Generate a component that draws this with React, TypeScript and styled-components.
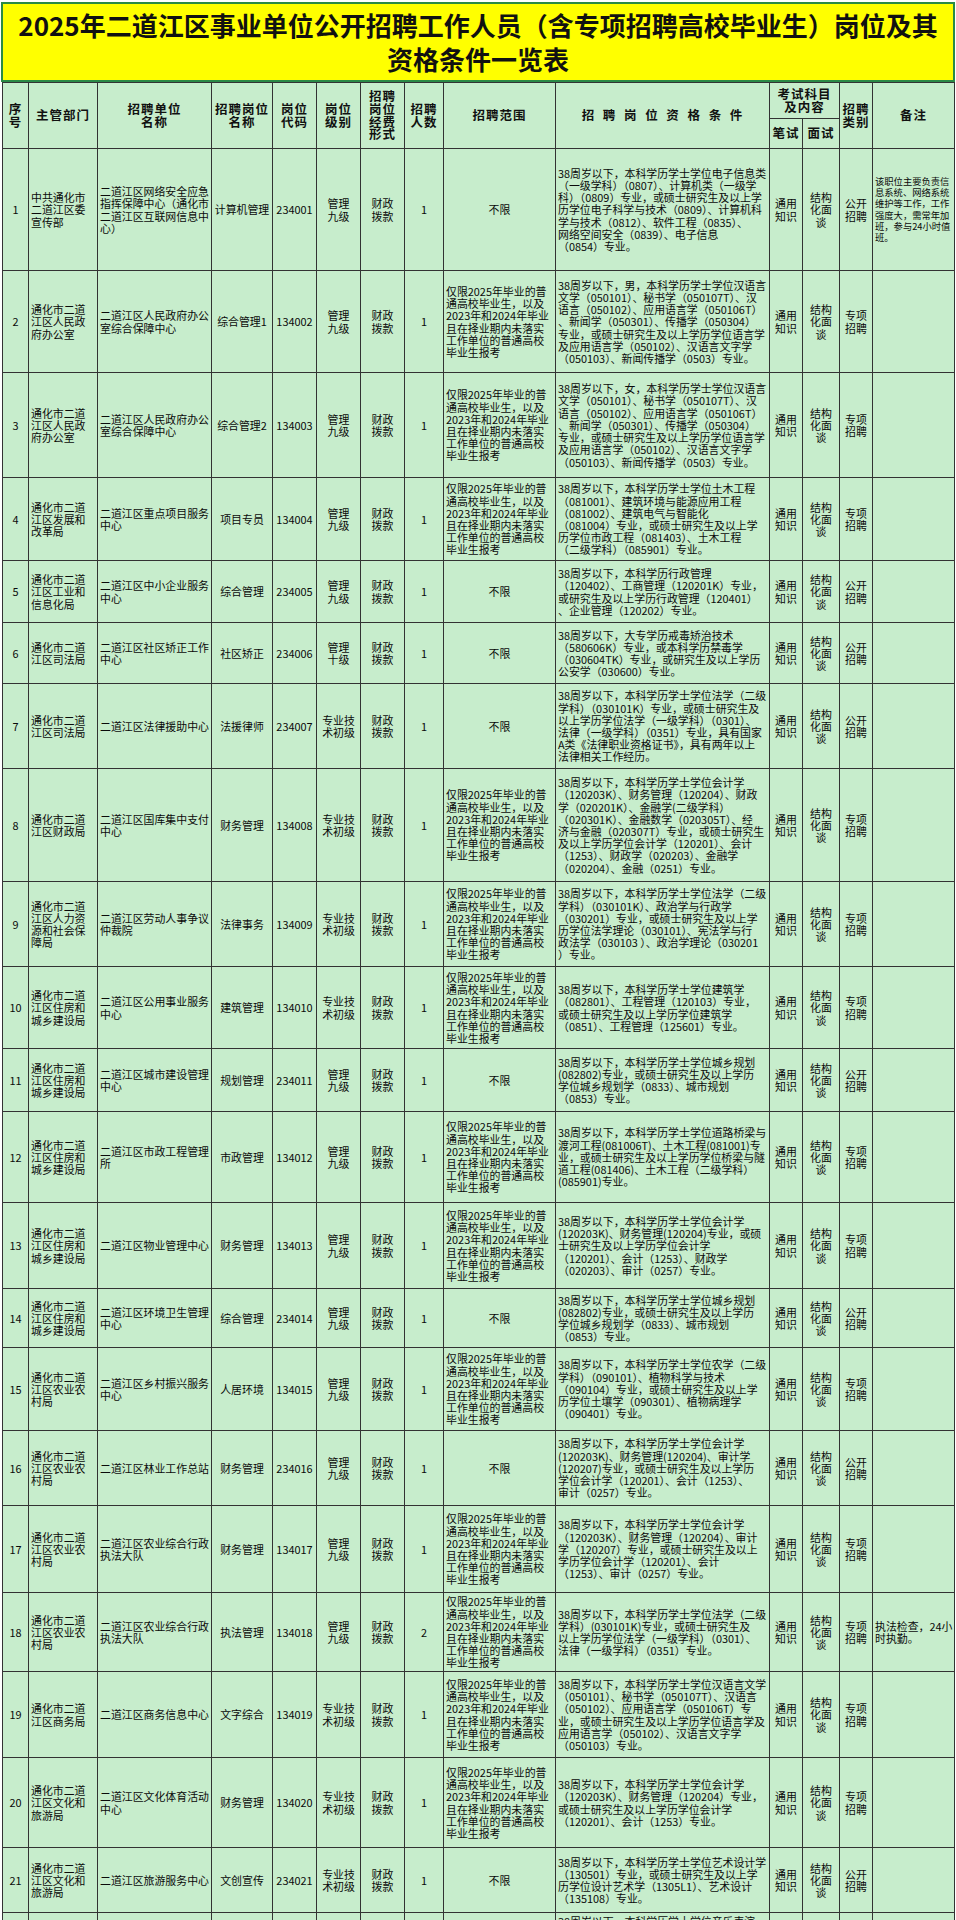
import React from 'react';
import styled, { createGlobalStyle } from 'styled-components';

const Global = createGlobalStyle`
  html, body { margin: 0; padding: 0; background: #ffffff; }
  body { font-family: "Noto Sans CJK SC", "Noto Sans", sans-serif; color: #0a0a0a; }
`;

const Page = styled.div`
  width: 956px;
  height: 1920px;
  overflow: hidden;
  display: flex;
  flex-direction: column;
  & > * { flex-shrink: 0; }
`;

const TitleBox = styled.h1`
  margin: 2px 1px 0 1px;
  height: 80px;
  box-sizing: border-box;
  background: #ffff00;
  border: 2px solid #2a8a45;
  display: flex;
  flex-direction: column;
  align-items: center;
  justify-content: center;
  font-size: 26px;
  font-weight: 700;
  line-height: 34px;
  color: #111;
`;

const TitleLine = styled.span`
  white-space: nowrap;
`;

const Table = styled.table`
  width: 952px;
  margin-left: 2px;
  table-layout: fixed;
  border-collapse: collapse;
  background: #c7edcc;
  font-size: 10.9px;
  line-height: 12.2px;
  color: #0a0a0a;
`;

const HeadRow = styled.tr<{ $h: number }>`
  height: ${(p) => p.$h}px;
`;

const HeadCell = styled.th`
  border: 1px solid #333333;
  padding: 0;
  font-weight: 700;
  font-size: 12.5px;
  letter-spacing: 1px;
  line-height: 12.8px;
  text-align: center;
  vertical-align: middle;
  white-space: pre;
  color: #111;
`;

const Row = styled.tr<{ $h: number }>`
  height: ${(p) => p.$h}px;
`;

const Cell = styled.td<{ $left?: boolean; $small?: boolean }>`
  border: 1px solid #333333;
  padding: ${(p) => (p.$left ? '0 0 0 2px' : '0')};
  text-align: ${(p) => (p.$left ? 'left' : 'center')};
  vertical-align: middle;
  white-space: pre;
  overflow: hidden;
  font-size: ${(p) => (p.$small ? '9.3px' : '10.9px')};
  line-height: ${(p) => (p.$small ? '11.3px' : '12.2px')};
`;

const COLS = [26, 69, 114, 61, 44, 44, 44, 39, 112, 214, 33, 37, 33, 82];

const LIMIT =
  '仅限2025年毕业的普\n通高校毕业生，以及\n2023年和2024年毕业\n且在择业期内未落实\n工作单位的普通高校\n毕业生报考';

type RowData = {
  h: number;
  no: string;
  dept: string;
  unit: string;
  post: string;
  code: string;
  level: string;
  count: string;
  scope: string;
  qual: string;
  type: string;
  remark?: string;
  remarkSmall?: boolean;
};

const MG = '管理\n九级';
const PRO = '专业技\n术初级';
const OPEN = '公开\n招聘';
const SPEC = '专项\n招聘';

const ROWS: RowData[] = [
  {
    h: 122, no: '1', dept: '中共通化市\n二道江区委\n宣传部',
    unit: '二道江区网络安全应急\n指挥保障中心（通化市\n二道江区互联网信息中\n心）',
    post: '计算机管理', code: '234001', level: MG, count: '1', scope: '不限',
    qual: '38周岁以下，本科学历学士学位电子信息类\n（一级学科）（0807）、计算机类（一级学\n科）（0809）专业，或硕士研究生及以上学\n历学位电子科学与技术（0809）、计算机科\n学与技术（0812）、软件工程（0835）、\n网络空间安全（0839）、电子信息\n（0854）专业。',
    type: OPEN,
    remark: '该职位主要负责信\n息系统、网络系统\n维护等工作，工作\n强度大，需常年加\n班，参与24小时值\n班。',
    remarkSmall: true,
  },
  {
    h: 102, no: '2', dept: '通化市二道\n江区人民政\n府办公室', unit: '二道江区人民政府办公\n室综合保障中心',
    post: '综合管理1', code: '134002', level: MG, count: '1', scope: LIMIT,
    qual: '38周岁以下，男，本科学历学士学位汉语言\n文学（050101）、秘书学（050107T）、汉\n语言（050102）、应用语言学（050106T）\n、新闻学（050301）、传播学（050304）\n专业，或硕士研究生及以上学历学位语言学\n及应用语言学（050102）、汉语言文字学\n（050103）、新闻传播学（0503）专业。',
    type: SPEC,
  },
  {
    h: 105, no: '3', dept: '通化市二道\n江区人民政\n府办公室', unit: '二道江区人民政府办公\n室综合保障中心',
    post: '综合管理2', code: '134003', level: MG, count: '1', scope: LIMIT,
    qual: '38周岁以下，女，本科学历学士学位汉语言\n文学（050101）、秘书学（050107T）、汉\n语言（050102）、应用语言学（050106T）\n、新闻学（050301）、传播学（050304）\n专业，或硕士研究生及以上学历学位语言学\n及应用语言学（050102）、汉语言文字学\n（050103）、新闻传播学（0503）专业。',
    type: SPEC,
  },
  {
    h: 83, no: '4', dept: '通化市二道\n江区发展和\n改革局', unit: '二道江区重点项目服务\n中心',
    post: '项目专员', code: '134004', level: MG, count: '1', scope: LIMIT,
    qual: '38周岁以下，本科学历学士学位土木工程\n（081001）、建筑环境与能源应用工程\n（081002）、建筑电气与智能化\n（081004）专业，或硕士研究生及以上学\n历学位市政工程（081403）、土木工程\n（二级学科）（085901）专业。',
    type: SPEC,
  },
  {
    h: 62, no: '5', dept: '通化市二道\n江区工业和\n信息化局', unit: '二道江区中小企业服务\n中心',
    post: '综合管理', code: '234005', level: MG, count: '1', scope: '不限',
    qual: '38周岁以下，本科学历行政管理\n（120402）、工商管理（120201K）专业，\n或研究生及以上学历行政管理（120401）\n、企业管理（120202）专业。',
    type: OPEN,
  },
  {
    h: 61, no: '6', dept: '通化市二道\n江区司法局', unit: '二道江区社区矫正工作\n中心',
    post: '社区矫正', code: '234006', level: '管理\n十级', count: '1', scope: '不限',
    qual: '38周岁以下，大专学历戒毒矫治技术\n（580606K）专业，或本科学历禁毒学\n（030604TK）专业，或研究生及以上学历\n公安学（030600）专业。',
    type: OPEN,
  },
  {
    h: 85, no: '7', dept: '通化市二道\n江区司法局', unit: '二道江区法律援助中心',
    post: '法援律师', code: '234007', level: PRO, count: '1', scope: '不限',
    qual: '38周岁以下，本科学历学士学位法学（二级\n学科）（030101K）专业，或硕士研究生及\n以上学历学位法学（一级学科）（0301）、\n法律（一级学科）（0351）专业，具有国家\nA类《法律职业资格证书》，具有两年以上\n法律相关工作经历。',
    type: OPEN,
  },
  {
    h: 113, no: '8', dept: '通化市二道\n江区财政局', unit: '二道江区国库集中支付\n中心',
    post: '财务管理', code: '134008', level: PRO, count: '1', scope: LIMIT,
    qual: '38周岁以下，本科学历学士学位会计学\n（120203K）、财务管理（120204）、财政\n学（020201K）、金融学(二级学科）\n（020301K）、金融数学（020305T）、经\n济与金融（020307T）专业，或硕士研究生\n及以上学历学位会计学（120201）、会计\n（1253）、财政学（020203）、金融学\n（020204）、金融（0251）专业。',
    type: SPEC,
  },
  {
    h: 85, no: '9', dept: '通化市二道\n江区人力资\n源和社会保\n障局', unit: '二道江区劳动人事争议\n仲裁院',
    post: '法律事务', code: '134009', level: PRO, count: '1', scope: LIMIT,
    qual: '38周岁以下，本科学历学士学位法学（二级\n学科）（030101K）、政治学与行政学\n（030201）专业，或硕士研究生及以上学\n历学位法学理论（030101）、宪法学与行\n政法学（030103 ）、政治学理论（030201\n）专业。',
    type: SPEC,
  },
  {
    h: 82, no: '10', dept: '通化市二道\n江区住房和\n城乡建设局', unit: '二道江区公用事业服务\n中心',
    post: '建筑管理', code: '134010', level: PRO, count: '1', scope: LIMIT,
    qual: '38周岁以下，本科学历学士学位建筑学\n（082801）、工程管理（120103）专业，\n或硕士研究生及以上学历学位建筑学\n（0851）、工程管理（125601）专业。',
    type: SPEC,
  },
  {
    h: 63, no: '11', dept: '通化市二道\n江区住房和\n城乡建设局', unit: '二道江区城市建设管理\n中心',
    post: '规划管理', code: '234011', level: MG, count: '1', scope: '不限',
    qual: '38周岁以下，本科学历学士学位城乡规划\n(082802)专业，或硕士研究生及以上学历\n学位城乡规划学（0833）、城市规划\n（0853）专业。',
    type: OPEN,
  },
  {
    h: 91, no: '12', dept: '通化市二道\n江区住房和\n城乡建设局', unit: '二道江区市政工程管理\n所',
    post: '市政管理', code: '134012', level: MG, count: '1', scope: LIMIT,
    qual: '38周岁以下，本科学历学士学位道路桥梁与\n渡河工程(081006T)、土木工程(081001)专\n业，或硕士研究生及以上学历学位桥梁与隧\n道工程(081406)、土木工程（二级学科）\n(085901)专业。',
    type: SPEC,
  },
  {
    h: 86, no: '13', dept: '通化市二道\n江区住房和\n城乡建设局', unit: '二道江区物业管理中心',
    post: '财务管理', code: '134013', level: MG, count: '1', scope: LIMIT,
    qual: '38周岁以下，本科学历学士学位会计学\n(120203K)、财务管理(120204)专业，或硕\n士研究生及以上学历学位会计学\n（120201）、会计（1253）、财政学\n（020203）、审计（0257）专业。',
    type: SPEC,
  },
  {
    h: 59, no: '14', dept: '通化市二道\n江区住房和\n城乡建设局', unit: '二道江区环境卫生管理\n中心',
    post: '综合管理', code: '234014', level: MG, count: '1', scope: '不限',
    qual: '38周岁以下，本科学历学士学位城乡规划\n(082802)专业，或硕士研究生及以上学历\n学位城乡规划学（0833）、城市规划\n（0853）专业。',
    type: OPEN,
  },
  {
    h: 83, no: '15', dept: '通化市二道\n江区农业农\n村局', unit: '二道江区乡村振兴服务\n中心',
    post: '人居环境', code: '134015', level: MG, count: '1', scope: LIMIT,
    qual: '38周岁以下，本科学历学士学位农学（二级\n学科）（090101）、植物科学与技术\n（090104）专业，或硕士研究生及以上学\n历学位土壤学（090301）、植物病理学\n（090401）专业。',
    type: SPEC,
  },
  {
    h: 75, no: '16', dept: '通化市二道\n江区农业农\n村局', unit: '二道江区林业工作总站',
    post: '财务管理', code: '234016', level: MG, count: '1', scope: '不限',
    qual: '38周岁以下，本科学历学士学位会计学\n(120203K)、财务管理(120204)、审计学\n(120207)专业，或硕士研究生及以上学历\n学位会计学（120201）、会计（1253）、\n审计（0257）专业。',
    type: OPEN,
  },
  {
    h: 87, no: '17', dept: '通化市二道\n江区农业农\n村局', unit: '二道江区农业综合行政\n执法大队',
    post: '财务管理', code: '134017', level: MG, count: '1', scope: LIMIT,
    qual: '38周岁以下，本科学历学士学位会计学\n（120203K）、财务管理（120204）、审计\n学（120207）专业，或硕士研究生及以上\n学历学位会计学（120201）、会计\n（1253）、审计（0257）专业。',
    type: SPEC,
  },
  {
    h: 79, no: '18', dept: '通化市二道\n江区农业农\n村局', unit: '二道江区农业综合行政\n执法大队',
    post: '执法管理', code: '134018', level: MG, count: '2', scope: LIMIT,
    qual: '38周岁以下，本科学历学士学位法学（二级\n学科）(030101K)专业，或硕士研究生及\n以上学历学位法学（一级学科）（0301）、\n法律（一级学科）（0351）专业。',
    type: SPEC,
    remark: '执法检查，24小\n时执勤。',
  },
  {
    h: 86, no: '19', dept: '通化市二道\n江区商务局', unit: '二道江区商务信息中心',
    post: '文字综合', code: '134019', level: PRO, count: '1', scope: LIMIT,
    qual: '38周岁以下，本科学历学士学位汉语言文学\n（050101）、秘书学（050107T）、汉语言\n（050102）、应用语言学（050106T）专\n业，或硕士研究生及以上学历学位语言学及\n应用语言学（050102）、汉语言文字学\n（050103）专业。',
    type: SPEC,
  },
  {
    h: 90, no: '20', dept: '通化市二道\n江区文化和\n旅游局', unit: '二道江区文化体育活动\n中心',
    post: '财务管理', code: '134020', level: PRO, count: '1', scope: LIMIT,
    qual: '38周岁以下，本科学历学士学位会计学\n（120203K）、财务管理（120204）专业，\n或硕士研究生及以上学历学位会计学\n（120201）、会计（1253）专业。',
    type: SPEC,
  },
  {
    h: 65, no: '21', dept: '通化市二道\n江区文化和\n旅游局', unit: '二道江区旅游服务中心',
    post: '文创宣传', code: '234021', level: PRO, count: '1', scope: '不限',
    qual: '38周岁以下，本科学历学士学位艺术设计学\n（130501）专业，或硕士研究生及以上学\n历学位设计艺术学（1305L1）、艺术设计\n（135108）专业。',
    type: OPEN,
  },
  {
    h: 66, no: '22', dept: '通化市二道\n江区文化和\n旅游局', unit: '二道江区文化馆',
    post: '文艺辅导', code: '234022', level: PRO, count: '1', scope: '不限',
    qual: '38周岁以下，本科学历学士学位音乐表演\n（130201）、舞蹈表演（130204）专业，\n或硕士研究生及以上学历学位音乐与舞蹈学\n（1302）、音乐（1352）专业。\n ',
    type: OPEN,
  },
];

export default function App() {
  return (
    <Page>
      <Global />
      <TitleBox>
        <TitleLine>2025年二道江区事业单位公开招聘工作人员（含专项招聘高校毕业生）岗位及其</TitleLine>
        <TitleLine>资格条件一览表</TitleLine>
      </TitleBox>
      <Table>
        <colgroup>
          {COLS.map((w, i) => (
            <col key={i} width={w} />
          ))}
        </colgroup>
        <thead>
          <HeadRow $h={36}>
            <HeadCell rowSpan={2}>{'序\n号'}</HeadCell>
            <HeadCell rowSpan={2}>主管部门</HeadCell>
            <HeadCell rowSpan={2}>{'招聘单位\n名称'}</HeadCell>
            <HeadCell rowSpan={2}>{'招聘岗位\n名称'}</HeadCell>
            <HeadCell rowSpan={2}>{'岗位\n代码'}</HeadCell>
            <HeadCell rowSpan={2}>{'岗位\n级别'}</HeadCell>
            <HeadCell rowSpan={2}>{'招聘\n岗位\n经费\n形式'}</HeadCell>
            <HeadCell rowSpan={2}>{'招聘\n人数'}</HeadCell>
            <HeadCell rowSpan={2}>招聘范围</HeadCell>
            <HeadCell rowSpan={2}>{'招  聘  岗  位  资  格  条  件'}</HeadCell>
            <HeadCell colSpan={2}>{'考试科目\n及内容'}</HeadCell>
            <HeadCell rowSpan={2}>{'招聘\n类别'}</HeadCell>
            <HeadCell rowSpan={2}>备注</HeadCell>
          </HeadRow>
          <HeadRow $h={30}>
            <HeadCell>笔试</HeadCell>
            <HeadCell>面试</HeadCell>
          </HeadRow>
        </thead>
        <tbody>
          {ROWS.map((r) => (
            <Row key={r.no} $h={r.h}>
              <Cell>{r.no}</Cell>
              <Cell $left>{r.dept}</Cell>
              <Cell $left>{r.unit}</Cell>
              <Cell>{r.post}</Cell>
              <Cell>{r.code}</Cell>
              <Cell>{r.level}</Cell>
              <Cell>{'财政\n拨款'}</Cell>
              <Cell>{r.count}</Cell>
              <Cell $left={r.scope !== '不限'}>{r.scope}</Cell>
              <Cell $left>{r.qual}</Cell>
              <Cell>{'通用\n知识'}</Cell>
              <Cell>{'结构\n化面\n谈'}</Cell>
              <Cell>{r.type}</Cell>
              <Cell $left $small={r.remarkSmall}>{r.remark ?? ''}</Cell>
            </Row>
          ))}
        </tbody>
      </Table>
    </Page>
  );
}
